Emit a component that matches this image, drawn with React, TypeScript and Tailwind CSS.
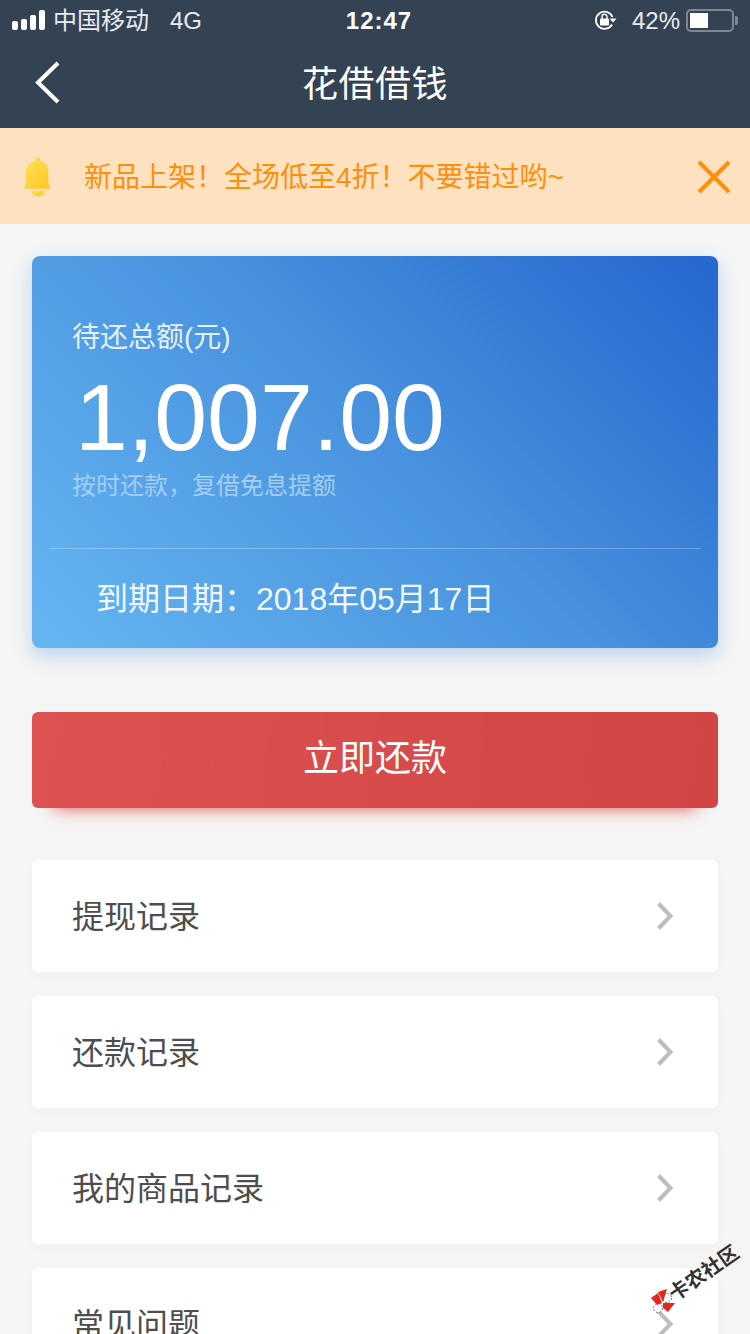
const rows = ["提现记录", "还款记录", "我的商品记录", "常见问题"];

const cjk = { fontFamily: '"Liberation Sans", "Noto Sans CJK SC", sans-serif' };

function StatusBar() {
  return (
    <div className="h-10 flex items-center pl-3 pr-[9px] text-[24px] text-white relative">
      <div className="flex items-end gap-[3px] mr-[8px]">
        <span className="w-[6px] h-[9px] bg-white rounded-[2px]" />
        <span className="w-[6px] h-[11px] bg-white rounded-[2px]" />
        <span className="w-[6px] h-[15px] bg-white rounded-[2px]" />
        <span className="w-[6px] h-[20px] bg-white rounded-[2px]" />
      </div>
      <span className="text-[#e8ebee] pt-[2px]">中国移动</span>
      <span className="ml-[21px] text-[#e8ebee] pt-[2px]">4G</span>
      <span className="absolute left-[8px] right-0 text-center font-bold tracking-[1px] pt-[2px] pointer-events-none">12:47</span>
      <div className="ml-auto flex items-center">
        <svg width="24" height="22" viewBox="0 0 24 22" className="mr-[14px]">
          <path d="M18.5 8A8.6 8.6 0 1 0 18 15.5" fill="none" stroke="#fff" strokeWidth="1.8" />
          <path d="M15.5 9.5h7l-3.5 4z" fill="#fff" />
          <rect x="6" y="9.5" width="9" height="7" rx="1" fill="#fff" />
          <path d="M8 10V7.8a2.5 2.5 0 0 1 5 0V10" fill="none" stroke="#fff" strokeWidth="1.4" />
        </svg>
        <span className="text-[#e8ebee] mr-[6px] pt-[2px]">42%</span>
        <div className="w-[48px] h-[23px] rounded-[5px] border-2 border-[#7d8894] p-[2px]">
          <div className="w-[18px] h-full bg-white" />
        </div>
        <span className="w-[3px] h-[9px] bg-[#7d8894] ml-[1px] rounded-r-[2px] mr-[3px]" />
      </div>
    </div>
  );
}

export default function App() {
  return (
    <div className="relative w-[750px] h-[1334px] overflow-hidden bg-[#f5f5f5]" style={cjk}>
      <div className="bg-[#344354]">
        <StatusBar />
        <div className="h-[88px] flex items-center justify-center relative">
          <svg width="30" height="46" viewBox="0 0 30 46" className="absolute left-[33px] top-[20px]">
            <path d="M25 3 L5 22.5 L25 42" fill="none" stroke="#fff" strokeWidth="4" />
          </svg>
          <span className="text-[36px] text-white tracking-[0.5px] pt-[1px]">花借借钱</span>
        </div>
      </div>

      <div className="h-24 bg-[#fee2c0] flex items-center pl-[23px] pr-[19px]">
        <svg width="30" height="41" viewBox="0 0 32 42" className="mt-[2px]">
          <defs>
            <linearGradient id="bell" x1="0" y1="0" x2="1" y2="1">
              <stop offset="0" stopColor="#ffe15a" />
              <stop offset="1" stopColor="#ffc51f" />
            </linearGradient>
          </defs>
          <rect x="13" y="0" width="5" height="5" fill="url(#bell)" />
          <path d="M16 3c7 0 11 5 11 12v9c0 4 1 7 2 8v1H1v-1c1-1 2-4 2-8v-9C3 8 9 3 16 3z" fill="url(#bell)" />
          <path d="M9 35h14c0 4-3 6-7 6s-7-2-7-6z" fill="url(#bell)" />
        </svg>
        <span className="ml-[31px] text-[28px] text-[#ff8e0b] whitespace-nowrap pt-[4px]">新品上架！全场低至4折！不要错过哟~</span>
        <svg width="34" height="34" viewBox="0 0 34 34" className="ml-auto mt-[1px]">
          <path d="M2 2 L32 32 M32 2 L2 32" stroke="#ff8e0b" strokeWidth="4" />
        </svg>
      </div>

      <div className="px-8 pt-8">
        <div className="h-[392px] rounded-[8px] bg-[linear-gradient(45deg,#65b6f1_0%,#4a94df_50%,#2467cf_100%)] shadow-[0_8px_20px_rgba(60,130,220,0.3)] flex flex-col">
          <div className="h-[292px] pl-10 pt-[62px] text-white">
            <div className="text-[28px] leading-[36px] text-[#e6f1fb] pt-[2px] h-[36px]">待还总额(元)</div>
            <div className="text-[95px] leading-[96px] mt-[15px] ml-[3px] h-[96px]">1,007.00</div>
            <div className="text-[24px] leading-[28px] mt-[7px] text-[#a4cff3]">按时还款，复借免息提额</div>
          </div>
          <div className="mx-[17px] border-t border-[#ffffff40] flex-1 flex items-center pl-[47px] text-[32px] text-[#f2f7fd]">
            到期日期：2018年05月17日
          </div>
        </div>

        <div className="mt-16 h-24 rounded-[6px] bg-[linear-gradient(95deg,#de5252,#d14545)] flex items-center justify-center text-[36px] text-white shadow-[0_22px_16px_-22px_rgba(222,82,82,1)]">
          <span className="-mt-[3px]">立即还款</span>
        </div>

        <div className="mt-[52px] flex flex-col gap-6">
          {rows.map((r) => (
            <div
              key={r}
              className="h-28 shrink-0 bg-white rounded-[6px] flex items-center pl-10 pr-[44px] text-[32px] text-[#4d4d4d] shadow-[0_4px_16px_rgba(0,0,0,0.02)]"
            >
              <span className="pt-[2px]">{r}</span>
              <svg width="18" height="28" viewBox="0 0 18 28" className="ml-auto">
                <path d="M2.5 1.5 L14.5 14 L2.5 26.5" fill="none" stroke="#bdbdbd" strokeWidth="4" />
              </svg>
            </div>
          ))}
        </div>
      </div>

      {/* watermark */}
      <svg width="28" height="26" viewBox="0 0 28 26" className="absolute left-[649px] top-[1288px]">
        <circle cx="18" cy="10" r="4.5" fill="#fff" stroke="#333" strokeWidth="0.7" strokeDasharray="2 1.5" />
        <circle cx="9" cy="20" r="4.5" fill="#fff" stroke="#333" strokeWidth="0.7" strokeDasharray="2 1.5" />
        <path d="M2 10L9 5l4 10-5 2zM9 4l9-3-4 13zM14 15h12l-7 9-5-4z" fill="#e5261f" />
      </svg>
      <span className="absolute left-[671px] top-[1286px] text-[20px] leading-none font-bold text-[#333] whitespace-nowrap -rotate-[35deg] origin-left">
        卡农社区
      </span>
    </div>
  );
}
